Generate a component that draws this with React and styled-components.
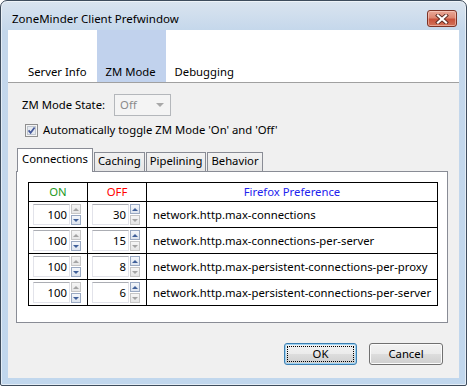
import styled, { createGlobalStyle } from "styled-components"

const prefs = [
  { on: 100, off: 30, name: "network.http.max-connections" },
  { on: 100, off: 15, name: "network.http.max-connections-per-server" },
  { on: 100, off: 8, name: "network.http.max-persistent-connections-per-proxy" },
  { on: 100, off: 6, name: "network.http.max-persistent-connections-per-server" },
]

const Spinner = ({ value, upOn, downOn }) => (
  <SpinWrap>
    <NumBox>{value}</NumBox>
    <SpinCol>
      <SpinBtn $on={upOn}><Arrow $on={upOn} $up /></SpinBtn>
      <SpinBtn $on={downOn}><Arrow $on={downOn} /></SpinBtn>
    </SpinCol>
  </SpinWrap>
)

export default () => {
  return (
    <>
      <GlobalStyle />
      <Window>
        <TitleBar>
          <Title>ZoneMinder Client Prefwindow</Title>
          <CloseBtn>
            <svg width="14" height="10" viewBox="0 0 14 10">
              <path d="M3 1.5 L11 8.5 M11 1.5 L3 8.5" stroke="#5b2a22" strokeWidth="4" strokeLinecap="square" />
              <path d="M3 1.5 L11 8.5 M11 1.5 L3 8.5" stroke="#fff" strokeWidth="2.2" strokeLinecap="square" />
            </svg>
          </CloseBtn>
        </TitleBar>
        <Client>
          <PaneBar>
            <PaneTab>Server Info</PaneTab>
            <PaneTab $active>ZM Mode</PaneTab>
            <PaneTab>Debugging</PaneTab>
          </PaneBar>
          <Content>
            <StateRow>
              <span>ZM Mode State:</span>
              <Select>
                Off
                <Caret />
              </Select>
            </StateRow>
            <CheckRow>
              <svg width="13" height="13" viewBox="0 0 13 13">
                <rect x="0.5" y="0.5" width="12" height="12" fill="#f4f4f4" stroke="#8f8f8f" />
                <rect x="2.5" y="2.5" width="8" height="8" fill="#e6eaf0" stroke="#c0c6ce" />
                <path d="M3.6 6.4 L5.6 8.8 L9.6 3.4" fill="none" stroke="#44589a" strokeWidth="1.7" />
              </svg>
              <span>Automatically toggle ZM Mode 'On' and 'Off'</span>
            </CheckRow>
            <TabBox>
              <TabStrip>
                <Tab $active>Connections</Tab>
                <Tab>Caching</Tab>
                <Tab>Pipelining</Tab>
                <Tab>Behavior</Tab>
              </TabStrip>
              <Panel>
                <Table>
                  <colgroup>
                    <col style={{ width: 59 }} />
                    <col style={{ width: 59 }} />
                    <col />
                  </colgroup>
                  <thead>
                    <tr>
                      <Th $color="#1c9a1c">ON</Th>
                      <Th $color="#ff0000">OFF</Th>
                      <Th $color="#2222ee">Firefox Preference</Th>
                    </tr>
                  </thead>
                  <tbody>
                    {prefs.map(p => (
                      <tr key={p.name}>
                        <SpinCell><Spinner value={p.on} downOn /></SpinCell>
                        <SpinCell><Spinner value={p.off} upOn /></SpinCell>
                        <NameCell>{p.name}</NameCell>
                      </tr>
                    ))}
                  </tbody>
                </Table>
              </Panel>
            </TabBox>
            <ButtonRow>
              <Button $default>OK</Button>
              <Button>Cancel</Button>
            </ButtonRow>
          </Content>
        </Client>
      </Window>
    </>
  )
}

const GlobalStyle = createGlobalStyle`
  html, body {
    margin:0;
    padding:0;
    background:#fff;
  }
  body {
    font-family:"Noto Sans", "Liberation Sans", sans-serif;
    font-size:11.3px;
    line-height:16px;
    color:#000;
  }
`

const Window = styled.div`
  width:467px;
  height:386px;
  box-sizing:border-box;
  border:1px solid #3e4c5c;
  border-radius:7px 7px 2px 2px;
  background:linear-gradient(#dae4ef 0px, #c4d7eb 30px, #c1d7ed 100%);
  box-shadow:inset 0 0 0 1px rgba(255,255,255,0.55);
  padding:0 7px 7px;
  display:flex;
  flex-direction:column;
`

const TitleBar = styled.div`
  height:29px;
  display:flex;
  justify-content:space-between;
  align-items:flex-start;
  padding:0 2px 0 4px;
`

const Title = styled.div`
  margin-top:10px;
  font-size:11.5px;
  color:#000;
`

const CloseBtn = styled.div`
  margin-top:9px;
  width:30px;
  height:17px;
  box-sizing:border-box;
  border:1px solid #7d3326;
  border-radius:3px;
  background:linear-gradient(#e9a898 0%, #dd8671 45%, #c9513b 55%, #d2735a 100%);
  box-shadow:inset 0 0 0 1px rgba(255,220,210,0.5);
  display:flex;
  align-items:center;
  justify-content:center;
`

const Client = styled.div`
  flex:1;
  background:#f0f0f0;
  display:flex;
  flex-direction:column;
`

const PaneBar = styled.div`
  height:52px;
  background:#fff;
  border-bottom:1px solid #a0a0a0;
  display:flex;
  padding-left:11px;
`

const PaneTab = styled.div`
  display:flex;
  align-items:flex-end;
  padding:0 10px 2px 9px;
  background:${p => (p.$active ? "#c1d2ed" : "transparent")};
`

const Content = styled.div`
  flex:1;
  display:flex;
  flex-direction:column;
  padding:11px 0 0 8px;
`

const StateRow = styled.div`
  display:flex;
  align-items:center;
  gap:9px;
  padding-left:6px;
`

const Select = styled.div`
  width:57px;
  height:22px;
  box-sizing:border-box;
  border:1px solid #b4b7bb;
  background:#f4f4f4;
  color:#8a8a8a;
  display:flex;
  align-items:center;
  justify-content:space-between;
  padding:0 6px 0 5px;
`

const Caret = styled.span`
  width:0;
  height:0;
  border-left:4px solid transparent;
  border-right:4px solid transparent;
  border-top:4px solid #a8a8a8;
`

const CheckRow = styled.div`
  margin-top:6px;
  padding-left:9px;
  display:flex;
  align-items:center;
  gap:5px;
`

const TabBox = styled.div`
  margin-top:10px;
  margin-right:11px;
`

const TabStrip = styled.div`
  display:flex;
  align-items:flex-end;
  padding-left:1px;
`

const Tab = styled.div`
  position:relative;
  z-index:${p => (p.$active ? 1 : 0)};
  height:${p => (p.$active ? "24px" : "19px")};
  margin-bottom:${p => (p.$active ? "-1px" : "0")};
  box-sizing:border-box;
  border:1px solid #898c95;
  border-bottom:none;
  padding:${p => (p.$active ? "2px 4px 0 4px" : "0 3px 0 3px")};
  background:${p => (p.$active ? "#fff" : "linear-gradient(#f2f2f2, #e6e6e6)")};
  & + & {
    margin-left:1px;
  }
`

const Panel = styled.div`
  height:152px;
  box-sizing:border-box;
  border:1px solid #898c95;
  background:#fff;
  padding:10px 0 0 11px;
`

const Table = styled.table`
  width:410px;
  border-collapse:collapse;
  table-layout:fixed;
  border:1px solid #000;
`

const Th = styled.th`
  height:18px;
  padding:0;
  border:1px solid #000;
  font-weight:normal;
  text-align:center;
  color:${p => p.$color};
`

const SpinCell = styled.td`
  height:25px;
  padding:0 0 0 4px;
  border:1px solid #000;
`

const NameCell = styled.td`
  padding:0 0 0 6px;
  border:1px solid #000;
  white-space:nowrap;
`

const SpinWrap = styled.div`
  display:flex;
  align-items:center;
  gap:1px;
`

const NumBox = styled.div`
  width:37px;
  height:21px;
  box-sizing:border-box;
  border:1px solid #e2e3ea;
  border-top-color:#abadb3;
  padding-right:2px;
  text-align:right;
  line-height:19px;
`

const SpinCol = styled.div`
  display:flex;
  flex-direction:column;
  gap:1px;
`

const SpinBtn = styled.div`
  width:10px;
  height:10px;
  box-sizing:border-box;
  border:1px solid ${p => (p.$on ? "#9aa9c2" : "#c6c6c6")};
  background:${p => (p.$on ? "linear-gradient(#f4f7fb, #dde4ee)" : "linear-gradient(#f6f6f6, #e6e6e6)")};
  display:flex;
  align-items:center;
  justify-content:center;
`

const Arrow = styled.span`
  width:0;
  height:0;
  border-left:3px solid transparent;
  border-right:3px solid transparent;
  ${p => (p.$up ? "border-bottom" : "border-top")}:3px solid ${p => (p.$on ? "#40609a" : "#a4a4a4")};
`

const ButtonRow = styled.div`
  margin-top:20px;
  padding-right:16px;
  display:flex;
  justify-content:flex-end;
  gap:12px;
`

const Button = styled.div`
  position:relative;
  width:${p => (p.$default ? "73px" : "74px")};
  height:22px;
  box-sizing:border-box;
  border:1px solid ${p => (p.$default ? "#3c7fb1" : "#707070")};
  border-radius:3px;
  background:linear-gradient(#f2f2f2 0%, #ebebeb 49%, #dddddd 50%, #cfcfcf 100%);
  box-shadow:inset 0 0 0 1px ${p => (p.$default ? "#9fd3f3" : "#fbfbfb")};
  display:flex;
  align-items:center;
  justify-content:center;
  &::after {
    content:"";
    display:${p => (p.$default ? "block" : "none")};
    position:absolute;
    inset:2px;
    border:1px dotted #000;
  }
`
